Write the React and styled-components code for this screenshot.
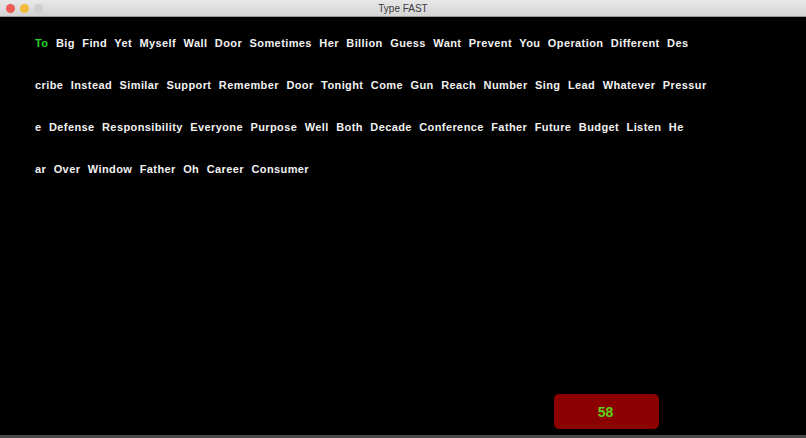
import React from "react";
import styled, { createGlobalStyle } from "styled-components";

const GlobalStyle = createGlobalStyle`
  html, body {
    margin: 0;
    padding: 0;
    background: #000;
  }
  body {
    font-family: "Liberation Sans", Arial, sans-serif;
  }
`;

export const Window = styled.div`
  width: 806px;
  height: 438px;
  display: flex;
  flex-direction: column;
  background: #000;
  overflow: hidden;
`;

export const TitleBar = styled.div`
  height: 16px;
  flex-shrink: 0;
  display: flex;
  align-items: center;
  position: relative;
  background: linear-gradient(#e8e8e8, #d3d3d3);
  border-bottom: 1px solid #9a9a9a;
`;

export const Lights = styled.div`
  display: flex;
  gap: 5px;
  padding-left: 6px;
`;

export const Light = styled.span`
  width: 9px;
  height: 9px;
  border-radius: 50%;
  background: ${(p) => p.color};
`;

export const Title = styled.div`
  position: absolute;
  left: 0;
  right: 0;
  text-align: center;
  font-size: 10px;
  color: #3a3a3a;
  font-family: "Liberation Sans", Arial, sans-serif;
`;

export const Content = styled.div`
  flex: 1;
  display: flex;
  flex-direction: column;
  padding: 5px 0 6px 35px;
`;

export const Line = styled.div`
  height: 42px;
  line-height: 42px;
  font-size: 11px;
  font-weight: bold;
  color: #f2f2f2;
  letter-spacing: 0.4px;
  word-spacing: 4px;
  white-space: pre;
`;

export const Typed = styled.span`
  color: #2ed12e;
`;

export const Footer = styled.div`
  margin-top: auto;
  display: flex;
  justify-content: flex-end;
  padding-right: 147px;
`;

export const Timer = styled.div`
  width: 105px;
  height: 35px;
  border-radius: 5px;
  background: #8b0000;
  display: flex;
  align-items: center;
  justify-content: center;
  color: #5fd11a;
  font-size: 14px;
  font-weight: bold;
  padding-right: 2px;
  box-sizing: border-box;
`;

export const BottomEdge = styled.div`
  height: 3px;
  flex-shrink: 0;
  background: #4a4a4a;
`;

const lines = [
  "Big Find Yet Myself Wall Door Sometimes Her Billion Guess Want Prevent You Operation Different Des",
  "cribe Instead Similar Support Remember Door Tonight Come Gun Reach Number Sing Lead Whatever Pressur",
  "e Defense Responsibility Everyone Purpose Well Both Decade Conference Father Future Budget Listen He",
  "ar Over Window Father Oh Career Consumer",
];

const App = () => {
  return (
    <Window>
      <GlobalStyle />
      <TitleBar>
        <Lights>
          <Light color="#ee5b55" />
          <Light color="#f2bb3b" />
          <Light color="#cfcfcf" />
        </Lights>
        <Title>Type FAST</Title>
      </TitleBar>
      <Content>
        {lines.map((line, idx) => (
          <Line key={idx}>
            {idx === 0 && <Typed>To </Typed>}
            {line}
          </Line>
        ))}
        <Footer>
          <Timer>58</Timer>
        </Footer>
      </Content>
      <BottomEdge />
    </Window>
  );
};

export default App;
